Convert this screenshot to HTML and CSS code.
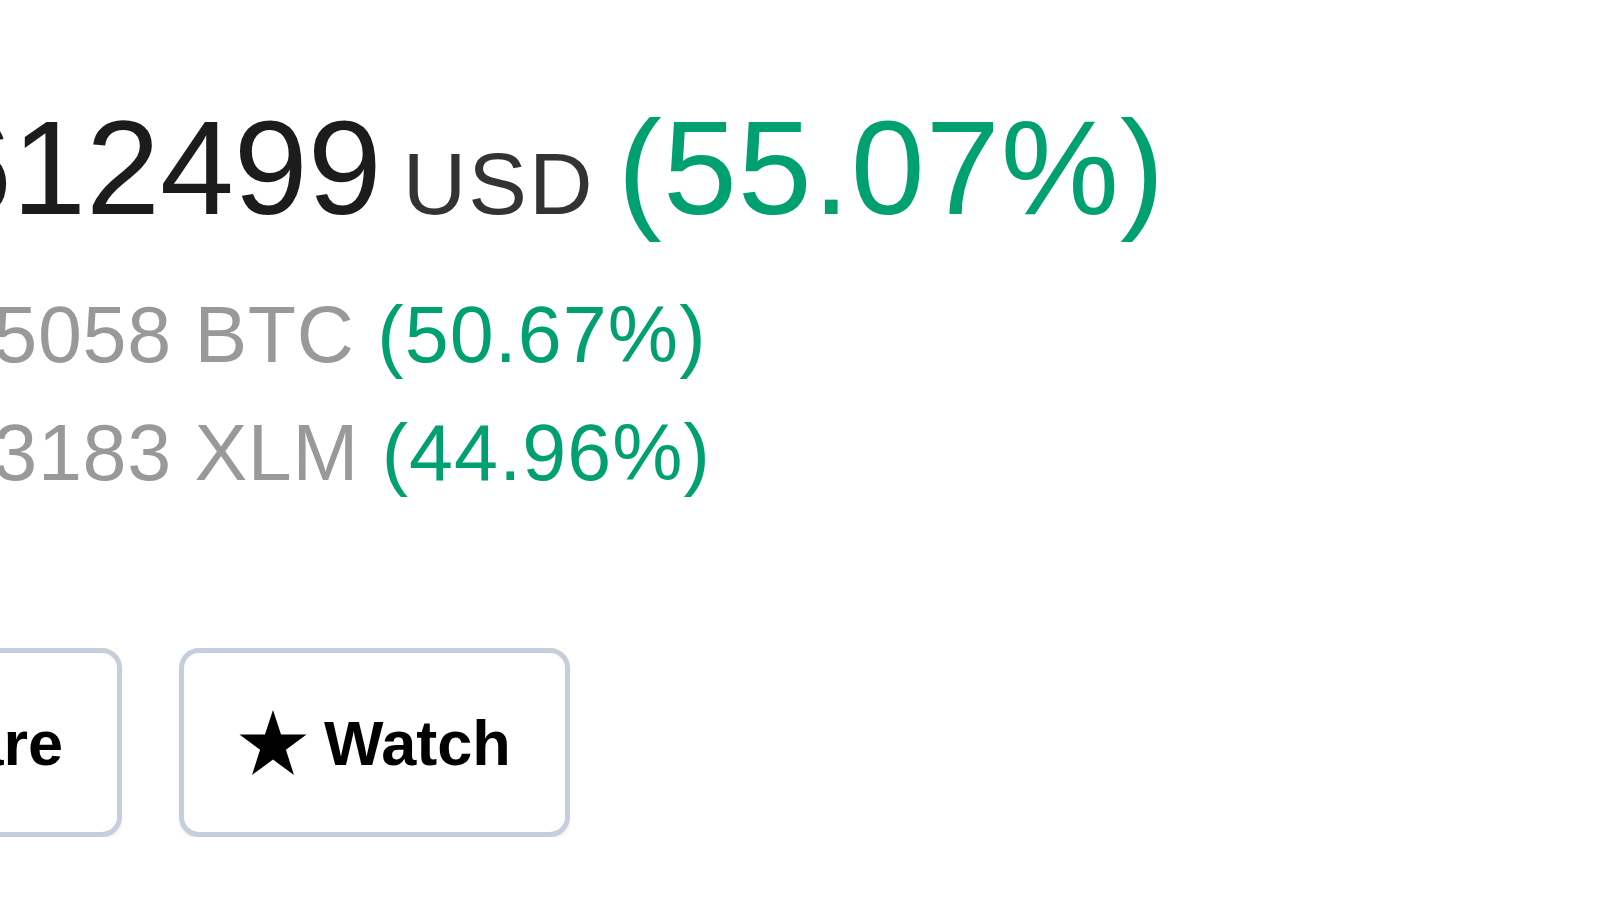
FILE: index.html
```html
<!DOCTYPE html>
<html lang="en">
<head>
  <meta charset="UTF-8">
  <meta name="viewport" content="width=device-width, initial-scale=1">
  <title>Account Balance</title>
  <link rel="stylesheet" href="styles.css">
</head>
<body>

<div class="balance">
  <div class="total">
    <span class="amount">612499</span><span class="unit">USD</span><span class="change">(55.07%)</span>
  </div>
  <div class="sub">0.5058 BTC <span class="change">(50.67%)</span></div>
  <div class="sub">1.3183 XLM <span class="change">(44.96%)</span></div>
</div>

<div class="actions">
  <button class="action-button">Share</button>
  <button class="action-button">
    <svg class="star" viewBox="0 0 100 93" aria-hidden="true">
      <polygon points="50,0 61.5,35 98,35 68.5,57 80,93 50,71 20,93 31.5,57 2,35 38.5,35"/>
    </svg>
    Watch
  </button>
</div>

</body>
</html>
```

FILE: styles.css
```css
:root {
  --text: #1c1c1c;
  --muted: #999999;
  --green: #00a070;
  --border: #c5cfdb;
}

body {
  margin: 0;
  font-family: "Liberation Sans", Arial, sans-serif;
  background-color: #ffffff;
  color: var(--text);
  overflow: hidden;
}

/* Balance block */
.balance {
  padding-top: 93px;
}

.total {
  font-size: 133px;
  line-height: 150px;
  white-space: nowrap;
  margin-left: -62px;
  margin-bottom: 33px;
}

.total .unit {
  font-size: 88px;
  line-height: 1;
  color: #333333;
  margin-left: 21px;
  letter-spacing: 2px;
}

.total .change {
  margin-left: 23px;
  letter-spacing: 1px;
}

.change {
  color: var(--green);
}

.sub {
  font-size: 79px;
  line-height: 118px;
  color: var(--muted);
  white-space: nowrap;
  margin-left: -74px;
  letter-spacing: 0.7px;
}

.sub .change {
  letter-spacing: 1.1px;
}

/* Buttons */
.actions {
  display: flex;
  gap: 57px;
  margin-top: 136px;
  margin-left: -171px;
}

.action-button {
  display: inline-flex;
  align-items: center;
  box-sizing: border-box;
  height: 189px;
  padding: 0 54px;
  background-color: #ffffff;
  border: 5px solid var(--border);
  border-radius: 20px;
  box-shadow: 0 3px 3px rgba(0, 0, 0, 0.05);
  font-family: "Liberation Sans", Arial, sans-serif;
  font-size: 63px;
  font-weight: bold;
  color: #000000;
}

.star {
  width: 70px;
  height: 65px;
  margin-right: 16px;
  fill: #000000;
}
```
